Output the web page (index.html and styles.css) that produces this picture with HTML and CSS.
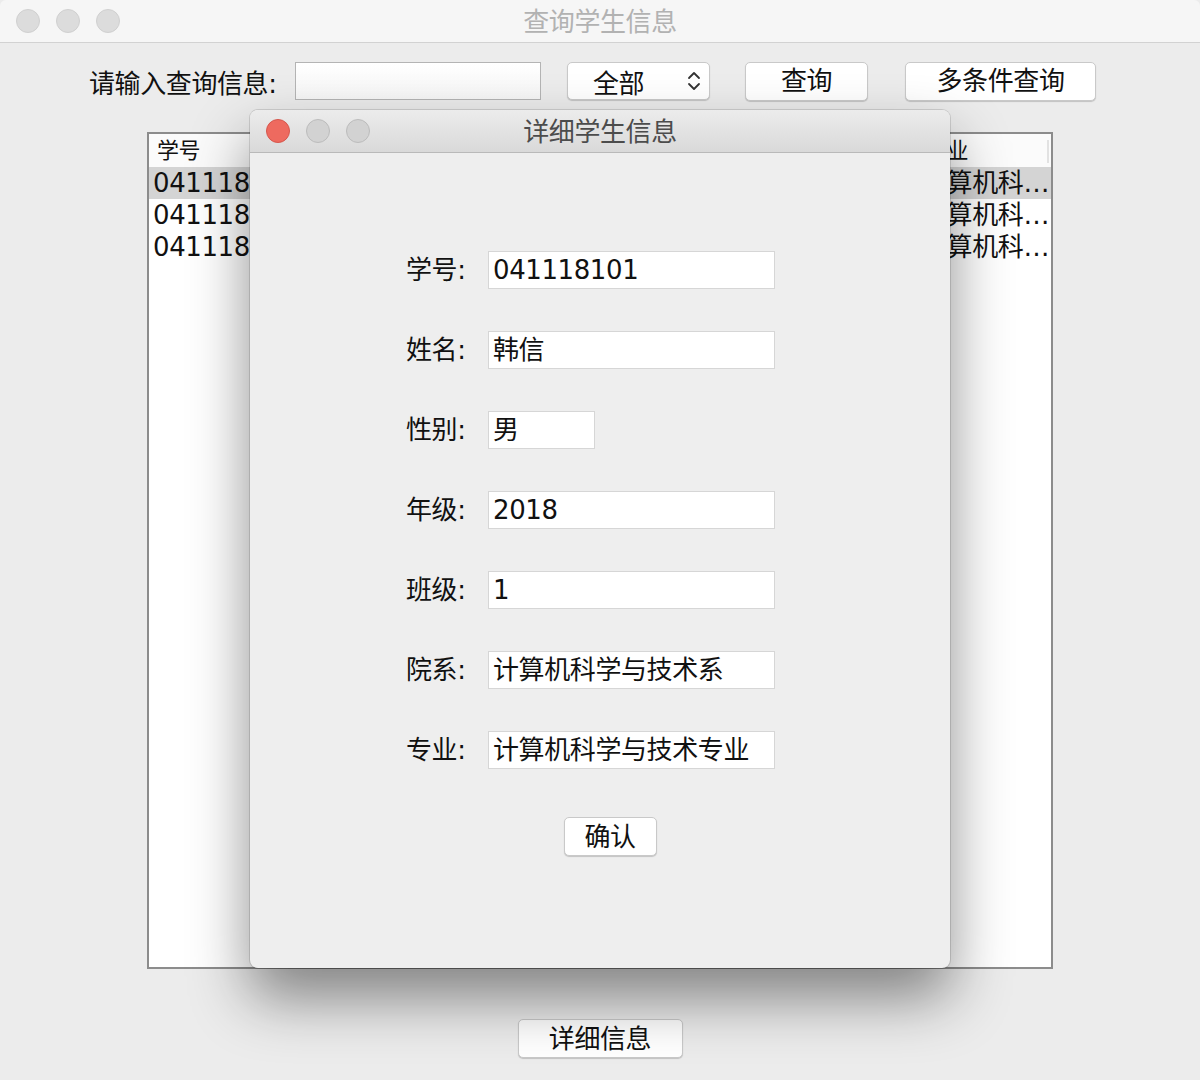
FILE: index.html
```html
<!DOCTYPE html>
<html lang="zh-CN">
<head>
    <meta charset="UTF-8">
    <meta name="viewport" content="width=device-width, initial-scale=1.0">
    <title>查询学生信息</title>
    <link rel="stylesheet" href="styles.css">
</head>
<body>
    <div class="window">
        <div class="titlebar inactive">
            <div class="lights">
                <span class="light"></span>
                <span class="light"></span>
                <span class="light"></span>
            </div>
            <div class="title">查询学生信息</div>
        </div>

        <div class="content">
            <div class="toolbar">
                <label class="search-label">请输入查询信息:</label>
                <div class="text-field search-field"></div>
                <div class="select">
                    <span>全部</span>
                    <svg class="chevrons" width="16" height="24" viewBox="0 0 16 24">
                        <path d="M3 9 L8 4 L13 9" fill="none" stroke="#333" stroke-width="1.8" stroke-linecap="round" stroke-linejoin="round"/>
                        <path d="M3 15 L8 20 L13 15" fill="none" stroke="#333" stroke-width="1.8" stroke-linecap="round" stroke-linejoin="round"/>
                    </svg>
                </div>
                <button class="btn btn-query">查询</button>
                <button class="btn btn-multi">多条件查询</button>
            </div>

            <div class="table-box">
                <table class="student-table">
                    <colgroup>
                        <col style="width: 160px">
                        <col style="width: 120px">
                        <col style="width: 100px">
                        <col style="width: 110px">
                        <col style="width: 100px">
                        <col style="width: 174px">
                        <col>
                    </colgroup>
                    <thead>
                        <tr>
                            <th>学号</th>
                            <th>姓名</th>
                            <th>性别</th>
                            <th>年级</th>
                            <th>班级</th>
                            <th>院系</th>
                            <th>专业</th>
                        </tr>
                    </thead>
                    <tbody>
                        <tr class="selected">
                            <td>041118101</td>
                            <td>韩信</td>
                            <td>男</td>
                            <td>2018</td>
                            <td>1</td>
                            <td>计算机科学与技术系</td>
                            <td>计算机科学与技术专业</td>
                        </tr>
                        <tr>
                            <td>041118102</td>
                            <td>李白</td>
                            <td>男</td>
                            <td>2018</td>
                            <td>1</td>
                            <td>计算机科学与技术系</td>
                            <td>计算机科学与技术专业</td>
                        </tr>
                        <tr>
                            <td>041118103</td>
                            <td>王昭君</td>
                            <td>女</td>
                            <td>2018</td>
                            <td>1</td>
                            <td>计算机科学与技术系</td>
                            <td>计算机科学与技术专业</td>
                        </tr>
                    </tbody>
                </table>
            </div>

            <div class="footer">
                <button class="btn btn-detail">详细信息</button>
            </div>
        </div>
    </div>

    <!-- modal dialog window -->
    <div class="dialog">
        <div class="titlebar active">
            <div class="lights">
                <span class="light red"></span>
                <span class="light"></span>
                <span class="light"></span>
            </div>
            <div class="title">详细学生信息</div>
        </div>

        <div class="dialog-body">
            <div class="form">
                <label>学号:</label>
                <div class="text-field">041118101</div>

                <label>姓名:</label>
                <div class="text-field">韩信</div>

                <label>性别:</label>
                <div class="text-field short">男</div>

                <label>年级:</label>
                <div class="text-field">2018</div>

                <label>班级:</label>
                <div class="text-field">1</div>

                <label>院系:</label>
                <div class="text-field">计算机科学与技术系</div>

                <label>专业:</label>
                <div class="text-field">计算机科学与技术专业</div>
            </div>

            <div class="dialog-actions">
                <button class="btn btn-ok">确认</button>
            </div>
        </div>
    </div>
</body>
</html>
```

FILE: styles.css
```css
/* --- General --- */
body {
    margin: 0;
    width: 1200px;
    height: 1080px;
    overflow: hidden;
    background-color: #ececec;
    font-family: "DejaVu Sans", "Noto Sans CJK SC", sans-serif;
    font-size: 26px;
    letter-spacing: -0.4px;
    color: #111;
    position: relative;
}

.window {
    width: 1200px;
    height: 1080px;
    display: flex;
    flex-direction: column;
    background-color: #ececec;
    border-radius: 6px 6px 0 0;
    overflow: hidden;
}

/* --- Title bars --- */
.titlebar {
    height: 42px;
    flex-shrink: 0;
    position: relative;
    display: flex;
    align-items: center;
    justify-content: center;
    border-bottom: 1px solid #d2d2d2;
}

.titlebar.inactive {
    background-color: #f6f6f6;
}

.titlebar.active {
    background: linear-gradient(to bottom, #ececec, #d9d9d9);
    border-bottom-color: #b9b9b9;
}

.lights {
    position: absolute;
    left: 16px;
    top: 9px;
    display: flex;
    gap: 16px;
}

.light {
    width: 22px;
    height: 22px;
    border-radius: 50%;
    background-color: #dcdcdc;
    border: 1px solid #d0d0d0;
}

.active .light {
    background-color: #d2d2d2;
    border-color: #bcbcbc;
}

.active .light.red {
    background-color: #ee6a5f;
    border-color: #d6574d;
}

.title {
    font-size: 26px;
    line-height: 1;
    color: #b2b2b2;
    margin-top: 2px;
}

.active .title {
    color: #4c4c4c;
}

/* --- Main content --- */
.content {
    flex: 1;
    display: flex;
    flex-direction: column;
}

.toolbar {
    display: flex;
    align-items: center;
    height: 38px;
    margin-top: 19px;
    padding-left: 89px;
}

.search-label {
    width: 206px;
    flex-shrink: 0;
}

.text-field {
    height: 38px;
    box-sizing: border-box;
    background-color: #fff;
    border: 1px solid #d6d6d6;
    padding-left: 4px;
    line-height: 36px;
    white-space: nowrap;
    overflow: hidden;
}

.search-field {
    width: 246px;
    border-color: #b4b4b4;
    background: linear-gradient(to bottom, #ffffff, #f6f6f6);
}

.select {
    width: 143px;
    height: 38px;
    box-sizing: border-box;
    margin-left: 26px;
    padding-left: 25px;
    padding-right: 7px;
    display: flex;
    align-items: center;
    justify-content: space-between;
    background-color: #fff;
    border: 1px solid #c9c9c9;
    border-radius: 5px;
    box-shadow: 0 1px 1px rgba(0, 0, 0, 0.18);
}

.btn {
    font-family: inherit;
    font-size: 26px;
    letter-spacing: -0.4px;
    line-height: 1;
    color: #111;
    height: 39px;
    padding: 0;
    background-color: #fff;
    border: 1px solid #c9c9c9;
    border-radius: 5px;
    box-shadow: 0 1px 1px rgba(0, 0, 0, 0.18);
}

.btn-query {
    width: 123px;
    margin-left: 35px;
}

.btn-multi {
    width: 191px;
    margin-left: 37px;
}

/* --- Table --- */
.table-box {
    width: 906px;
    height: 837px;
    box-sizing: border-box;
    margin: 32px 0 0 147px;
    border: 2px solid #8c8c8c;
    background-color: #fff;
    overflow: hidden;
}

.student-table {
    width: 100%;
    table-layout: fixed;
    border-collapse: collapse;
}

.student-table th {
    height: 33px;
    padding: 0 0 0 8px;
    text-align: left;
    font-weight: normal;
    font-size: 22px;
    line-height: 33px;
    background-color: #fbfbfb;
    white-space: nowrap;
    overflow: hidden;
    position: relative;
}

.student-table th:last-child {
    padding-left: 12px;
}

.student-table th::after {
    content: '';
    position: absolute;
    right: 2px;
    top: 6px;
    bottom: 4px;
    width: 2px;
    background-color: #e2e2e2;
}

.student-table td {
    height: 32px;
    line-height: 32px;
    padding: 0 2px 0 4px;
    white-space: nowrap;
    overflow: hidden;
    text-overflow: ellipsis;
}

.student-table td:last-child {
    padding: 0 0 0 8px;
}

.student-table tr.selected td {
    background-color: #d4d4d4;
}

.footer {
    display: flex;
    justify-content: center;
    margin-top: 50px;
}

.btn-detail {
    width: 165px;
}

/* --- Dialog --- */
.dialog {
    position: absolute;
    left: 250px;
    top: 110px;
    width: 700px;
    height: 858px;
    display: flex;
    flex-direction: column;
    background-color: #eeeeee;
    border-radius: 8px;
    overflow: hidden;
    box-shadow: 0 0 0 1px rgba(0, 0, 0, 0.12), 0 30px 60px rgba(0, 0, 0, 0.45);
}

.dialog-body {
    flex: 1;
    padding-top: 98px;
}

.form {
    display: grid;
    grid-template-columns: 82px 287px;
    row-gap: 42px;
    margin-left: 156px;
    align-items: center;
}

.form label {
    line-height: 38px;
}

.text-field.short {
    width: 107px;
}

.dialog-actions {
    display: flex;
    justify-content: center;
    margin-top: 48px;
    padding-left: 20px;
}

.btn-ok {
    width: 93px;
}
```
